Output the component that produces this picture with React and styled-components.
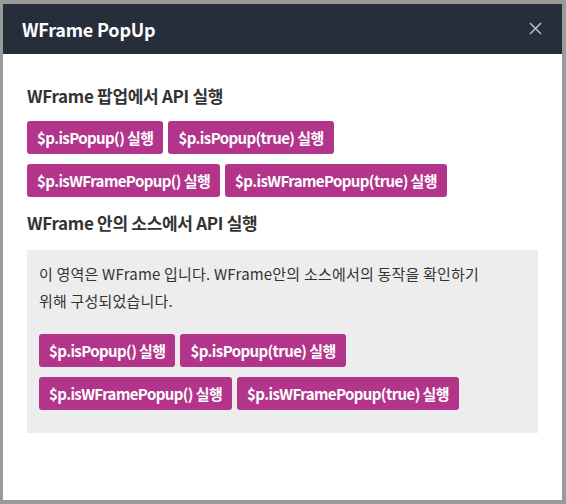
import React from 'react';
import styled, { createGlobalStyle } from 'styled-components';

const GlobalStyle = createGlobalStyle`
  html, body {
    margin: 0;
    padding: 0;
    background: #9a9a9a;
    font-family: "Noto Sans CJK KR", "Noto Sans", sans-serif;
  }
`;

const Backdrop = styled.div`
  width: 566px;
  height: 504px;
  padding: 4px 4px 4px 3px;
  box-sizing: border-box;
  background: #9a9a9a;
`;

const Modal = styled.div`
  width: 559px;
  height: 496px;
  background: #fff;
  display: flex;
  flex-direction: column;
`;

const Header = styled.div`
  height: 50px;
  background: #262d3b;
  display: flex;
  align-items: center;
  justify-content: space-between;
  padding: 0 19px 0 19px;
  flex-shrink: 0;
`;

const Title = styled.h2`
  margin: 0;
  color: #fff;
  font-size: 18px;
  font-weight: 700;
  letter-spacing: -0.2px;
`;

const CloseButton = styled.button`
  background: none;
  border: none;
  padding: 0;
  width: 14px;
  height: 14px;
  cursor: pointer;
  display: flex;
`;

const Body = styled.div`
  padding: 30px 24px 0 24px;
  display: flex;
  flex-direction: column;
`;

const SectionTitle = styled.h3`
  margin: ${p => p.$top || 0}px 0 ${p => p.$gap || 12}px;
  font-size: 17px;
  font-weight: 700;
  color: #333;
  line-height: 24px;
  letter-spacing: -0.3px;
`;

const ButtonGroup = styled.div`
  display: flex;
  flex-wrap: wrap;
  gap: 10px 5px;
  margin-bottom: ${p => p.$mb || 0}px;
`;

const ApiButton = styled.button`
  background: #b3358b;
  color: #fff;
  border: none;
  border-radius: 3px;
  height: 33px;
  padding: 0 10px;
  font-family: inherit;
  font-size: 15px;
  font-weight: 700;
  letter-spacing: -0.6px;
  cursor: pointer;
`;

const FrameBox = styled.div`
  background: #ededed;
  padding: 10px 30px 23px 12px;
`;

const FrameText = styled.p`
  margin: 0 0 20px;
  font-size: 15px;
  line-height: 27px;
  color: #333;
  letter-spacing: 0.2px;
  word-break: keep-all;
`;

const buttons = [
  ['$p.isPopup() 실행', '$p.isPopup(true) 실행'],
  ['$p.isWFramePopup() 실행', '$p.isWFramePopup(true) 실행'],
];

const Buttons = () => (
  <>
    {buttons.map((row, i) => (
      <ButtonGroup key={i} $mb={i === 0 ? 10 : 0}>
        {row.map(label => <ApiButton key={label}>{label}</ApiButton>)}
      </ButtonGroup>
    ))}
  </>
);

export default function App() {
  return (
    <Backdrop>
      <GlobalStyle />
      <Modal>
        <Header>
          <Title>WFrame PopUp</Title>
          <CloseButton aria-label="close">
            <svg width="13" height="13" viewBox="0 0 13 13">
              <path d="M1 1L12 12M12 1L1 12" stroke="#b8bcc4" strokeWidth="1.6" />
            </svg>
          </CloseButton>
        </Header>
        <Body>
          <SectionTitle $gap={13}>WFrame 팝업에서 API 실행</SectionTitle>
          <Buttons />
          <SectionTitle $top={14} $gap={15}>WFrame 안의 소스에서 API 실행</SectionTitle>
          <FrameBox>
            <FrameText>
              이 영역은 WFrame 입니다. WFrame안의 소스에서의 동작을 확인하기 위해 구성되었습니다.
            </FrameText>
            <Buttons />
          </FrameBox>
        </Body>
      </Modal>
    </Backdrop>
  );
}
